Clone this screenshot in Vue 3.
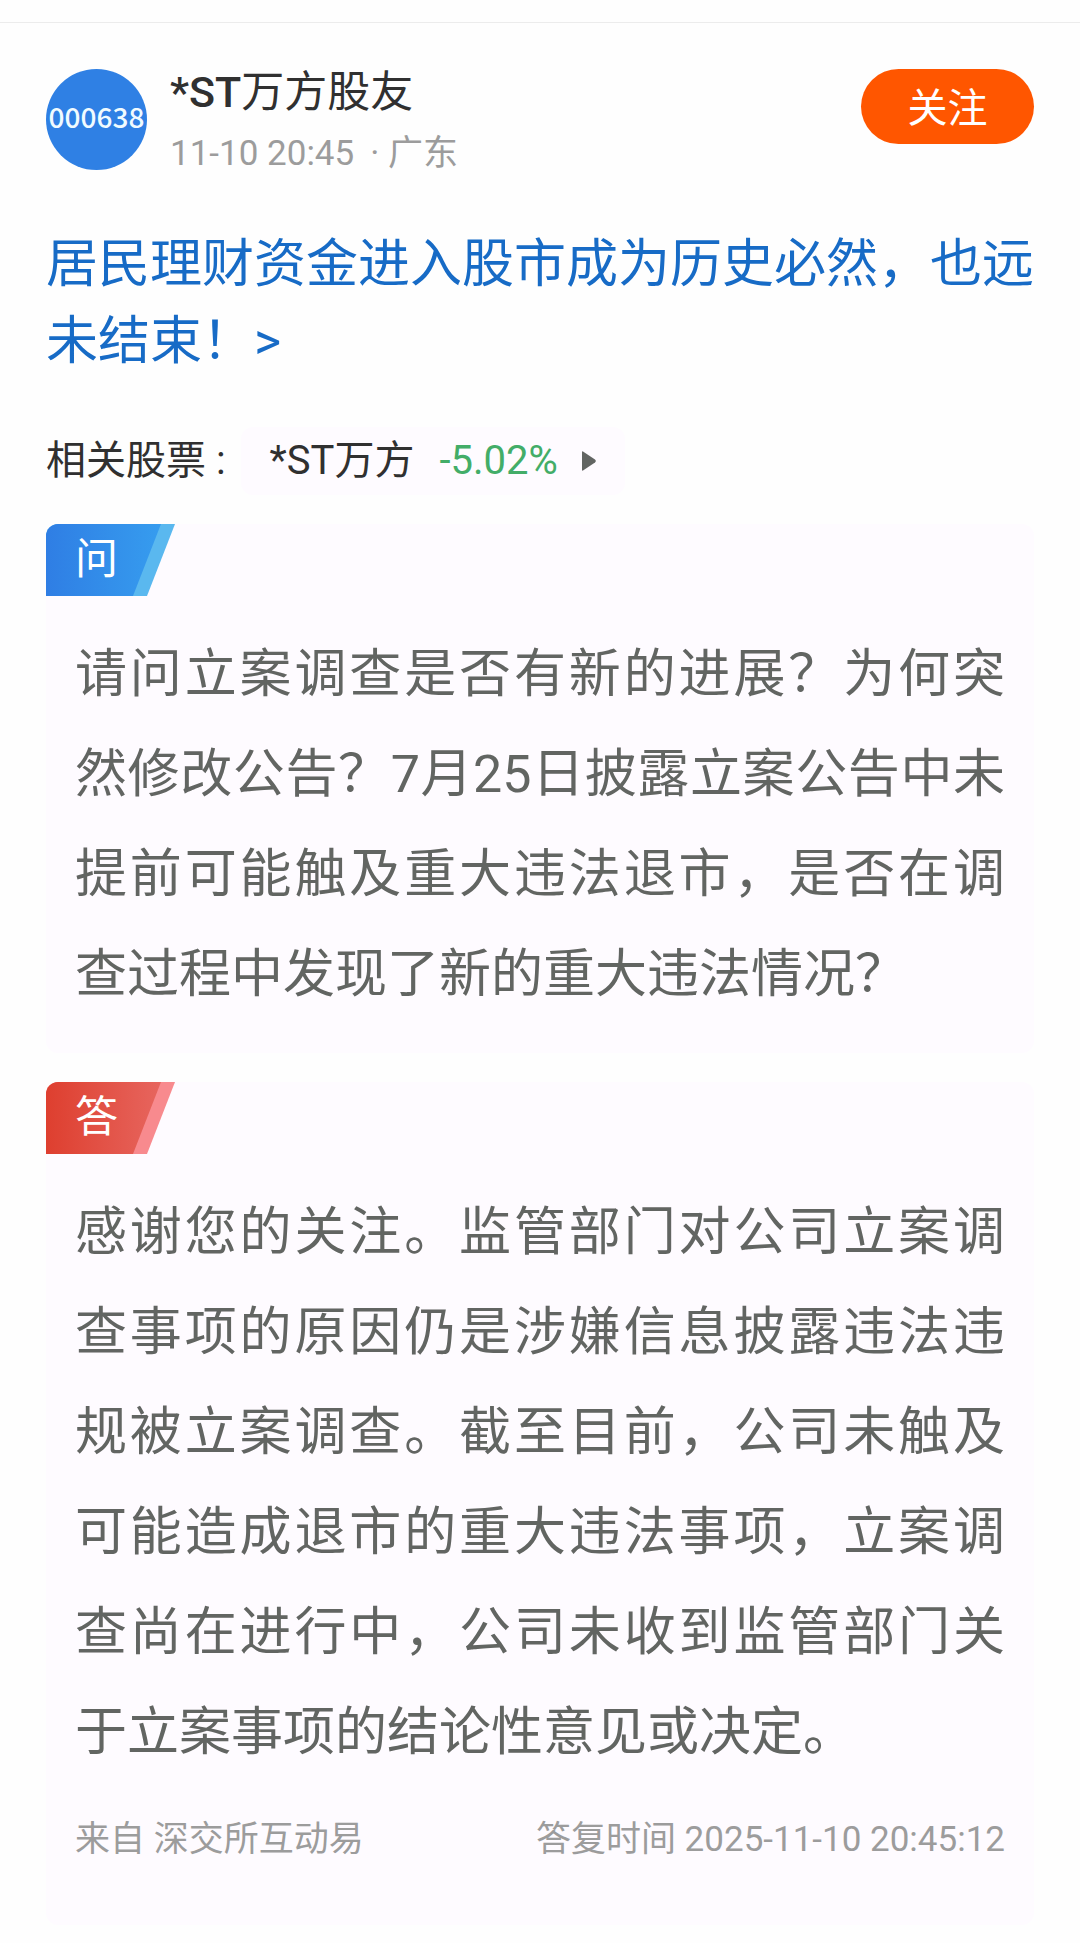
<script setup>
const post = {
  avatar: '000638',
  prefix: '*ST',
  name: '万方股友',
  time: '11-10 20:45',
  region: '广东',
  title: '居民理财资金进入股市成为历史必然，也远未结束！>',
}

const stock = { name: '*ST万方', change: '-5.02%' }

const cards = [
  {
    kind: 'ask',
    label: '问',
    text: '请问立案调查是否有新的进展？为何突然修改公告？7月25日披露立案公告中未提前可能触及重大违法退市，是否在调查过程中发现了新的重大违法情况？',
  },
  {
    kind: 'answer',
    label: '答',
    text: '感谢您的关注。监管部门对公司立案调查事项的原因仍是涉嫌信息披露违法违规被立案调查。截至目前，公司未触及可能造成退市的重大违法事项，立案调查尚在进行中，公司未收到监管部门关于立案事项的结论性意见或决定。',
    source: '来自 深交所互动易',
    replied: '答复时间 2025-11-10 20:45:12',
  },
]
</script>

<template>
  <main class="page">
    <article class="post">
      <header class="author">
        <div class="avatar">{{ post.avatar }}</div>
        <div class="who">
          <div class="name"><span class="prefix">{{ post.prefix }}</span>{{ post.name }}</div>
          <div class="meta">
            <time>{{ post.time }}</time>
            <span>· {{ post.region }}</span>
          </div>
        </div>
        <button class="follow" type="button">关注</button>
      </header>

      <h1 class="title"><a href="#">{{ post.title }}</a></h1>

      <div class="related">
        <span>相关股票 :</span>
        <a class="stock" href="#">
          <span>{{ stock.name }}</span>
          <span class="change">{{ stock.change }}</span>
          <svg class="arrow" viewBox="0 0 14 20" aria-hidden="true">
            <path d="M0 1Q0 0 1 0.4L13 8.6Q14.6 10 13 11.4L1 19.6Q0 20 0 19Z" />
          </svg>
        </a>
      </div>

      <section v-for="card in cards" :key="card.kind" class="card">
        <h2 class="tab" :class="card.kind">{{ card.label }}</h2>
        <p class="text">{{ card.text }}</p>
        <footer v-if="card.source" class="foot">
          <span>{{ card.source }}</span>
          <span>{{ card.replied }}</span>
        </footer>
      </section>
    </article>
  </main>
</template>

<style>
body {
  background: #fefefe;
}
</style>

<style scoped>
.page {
  padding-top: 22px;
  font-family: Roboto, "Noto Sans CJK SC", sans-serif;
  color: #303030;
}

.post {
  border-top: 1px solid #ececec;
  padding: 46px 46px 18px;
}

.author {
  display: flex;
  align-items: flex-start;
}

.avatar {
  display: flex;
  align-items: center;
  justify-content: center;
  width: 101px;
  height: 101px;
  padding-bottom: 8px;
  box-sizing: border-box;
  border-radius: 50%;
  background: #2f80e4;
  color: #f0fbff;
  font-family: "Noto Sans CJK SC", sans-serif;
  font-size: 28px;
  font-weight: 500;
  line-height: 40px;
}

.who {
  flex: 1;
  margin-left: 23px;
}

.name {
  font-size: 43px;
  line-height: 46px;
}

.prefix {
  font-weight: 500;
}

.meta {
  display: flex;
  gap: 16px;
  margin-top: 15px;
  font-size: 35px;
  line-height: 48px;
  color: #9c9c9c;
}

.follow {
  width: 173px;
  height: 75px;
  padding: 4px 0 0;
  border: 0;
  border-radius: 38px;
  background: #ff5600;
  color: #fff;
  font: inherit;
  font-size: 40px;
  line-height: 71px;
}

.title {
  margin: 48px 0 0;
  font-size: 52px;
  font-weight: 400;
  line-height: 77px;
}

.title a {
  color: #176bc6;
  text-decoration: none;
}

.related {
  display: flex;
  align-items: center;
  gap: 15px;
  margin-top: 47px;
  font-size: 40px;
  line-height: 68px;
}

.stock {
  display: flex;
  align-items: center;
  padding: 0 29px;
  border-radius: 12px;
  background: #fefbff;
  color: inherit;
  text-decoration: none;
}

.change {
  margin: 0 24px 0 25px;
  color: #43ad68;
}

.arrow {
  width: 14px;
  height: 20px;
  fill: #626562;
}

.card {
  margin-top: 29px;
  padding-bottom: 28px;
  border-radius: 12px;
  background: #fefbff;
  overflow: hidden;
}

.tab {
  position: relative;
  isolation: isolate;
  width: 129px;
  height: 72px;
  box-sizing: border-box;
  margin: 0 0 29px;
  padding-left: 29px;
  clip-path: polygon(0 0, 129px 0, 101px 72px, 0 72px);
  color: #fff;
  font-size: 43px;
  font-weight: 400;
  line-height: 70px;
}

.tab::before {
  content: "";
  position: absolute;
  inset: 0;
  z-index: -1;
  clip-path: polygon(0 0, 115px 0, 87px 72px, 0 72px);
}

.ask {
  background: #5ab8ef;
}

.ask::before {
  background: linear-gradient(90deg, #2f7ee4, #37a0f0);
}

.answer {
  background: #f88a8e;
}

.answer::before {
  background: linear-gradient(90deg, #de3f2f, #e86a64);
}

.text {
  margin: 0 29px;
  font-size: 52px;
  line-height: 100px;
  text-align: justify;
  color: #626562;
}

.foot {
  display: flex;
  justify-content: space-between;
  margin: 32px 29px;
  font-size: 35px;
  line-height: 50px;
  color: #9c9c9c;
}
</style>
